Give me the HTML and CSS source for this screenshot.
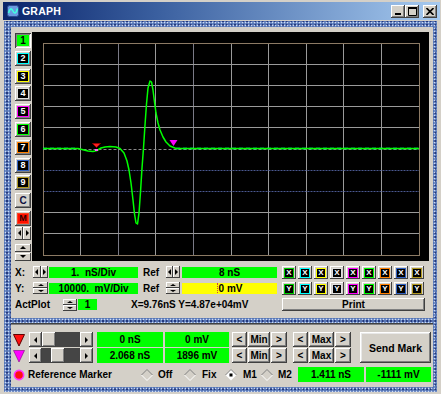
FILE: index.html
```html
<!DOCTYPE html>
<html>
<head>
<meta charset="utf-8">
<title>GRAPH</title>
<link rel="stylesheet" href="styles.css">
</head>
<body>
<div class="win">
  <div class="titlebar">
    <svg class="appicon" width="12" height="12" viewBox="0 0 12 12">
      <rect x="0.5" y="0.5" width="11" height="11" rx="2" fill="#6a9ae0" stroke="#2a4a90"/>
      <path d="M1.5 8 Q3.5 1 6 6 T10.5 3.5" fill="none" stroke="#40ffe0" stroke-width="1.6"/>
    </svg>
    <span class="title">GRAPH</span>
    <div class="tbtns">
      <div class="tbtn"><svg width="8" height="8" viewBox="0 0 8 8"><rect x="1" y="6" width="6" height="2" fill="#000"/></svg></div>
      <div class="tbtn"><svg width="9" height="9" viewBox="0 0 9 9"><path d="M0.5 0.5h8v8h-8z" fill="none" stroke="#000"/><rect x="0" y="0" width="9" height="2" fill="#000"/></svg></div>
      <div class="tbtn close"><svg width="8" height="7" viewBox="0 0 8 7"><path d="M0.5 0L7.5 7M7.5 0L0.5 7" stroke="#000" stroke-width="1.6"/></svg></div>
    </div>
  </div>

  <div class="frame">
    <div class="panel p1">
      <div class="top">
        <div class="chcol">
          <div class="ch on"><span>1</span></div>
          <div class="ch k2"><span>2</span></div>
          <div class="ch k3"><span>3</span></div>
          <div class="ch k4"><span>4</span></div>
          <div class="ch k5"><span>5</span></div>
          <div class="ch k6"><span>6</span></div>
          <div class="ch k7"><span>7</span></div>
          <div class="ch k8"><span>8</span></div>
          <div class="ch k9"><span>9</span></div>
          <div class="ch cc"><span>C</span></div>
          <div class="ch cm"><span>M</span></div>
          <div class="lr"><div class="half"><i class="tl"></i></div><div class="half"><i class="tr"></i></div></div>
          <div class="ud"><div class="half"><i class="tu"></i></div><div class="half"><i class="td"></i></div></div>
        </div>
        <div class="scope">
          <svg width="397" height="229" viewBox="32 32 397 229">
            <g class="grid" stroke="#9a9a9a" stroke-width="1" fill="none">
              <path d="M80.5 43.5V255.5M155.5 43.5V255.5M231.5 43.5V255.5M268.5 43.5V255.5M306.5 43.5V255.5M343.5 43.5V255.5M381.5 43.5V255.5"/>
              <path d="M118.5 43.5V255.5M193.5 43.5V255.5" stroke="#7a7a86"/>
              <path d="M43.5 64.5H419.5M43.5 85.5H419.5M43.5 106.5H419.5M43.5 127.5H419.5M43.5 212.5H419.5M43.5 233.5H419.5"/>
              <path d="M43.5 170.5H419.5M43.5 191.5H419.5" stroke="#4a5890" stroke-dasharray="2 1"/>
              <path d="M43.5 149.5H419.5" stroke="#8a8a8a" stroke-dasharray="3 2"/>
              <rect x="43.5" y="43.5" width="376" height="212" stroke="#8c7a64"/>
            </g>
            <path d="M43 148.5H78M176 148.5H419" stroke="#20e0e0" stroke-width="1.5" stroke-dasharray="4 3" fill="none"/>
            <polyline fill="none" stroke="#00ff00" stroke-width="1.5" stroke-linejoin="round"
              points="43,148.5 78,148.5 82,149.5 88,151 93,151.5 97,150.5 101,148 105,147 110,146.5 116,147 120,148.5 124,153 127,161 129,170 131,183 133,200 134.5,214 136,223 137.5,224 139,213 140.5,192 142,168 143.5,148 145,125 146.5,104 148,88 150,81 151.5,82 153,90 154.5,102 156,113 158,123 160,130 163,137 166,142 170,146 176,148.5 419,148.5"/>
            <polygon points="92.5,143.5 100.5,143.5 96.5,147.5" fill="#ff2020" stroke="#a00000" stroke-width="0.8"/>
            <rect x="95" y="149" width="3" height="2" fill="#ff60ff"/>
            <polygon points="169.5,140 177.5,140 173.5,146" fill="#ff00ff"/>
          </svg>
        </div>
      </div>

      <div class="row first">
        <span class="lbl w18">X:</span>
        <div class="spin w15"><div class="half"><i class="tl"></i></div><div class="half"><i class="tr"></i></div></div>
        <div class="lcd w89 gl1">1.  nS/Div</div>
        <span class="lbl reflbl">Ref</span>
        <div class="spin w14"><div class="half"><i class="tl"></i></div><div class="half"><i class="tr"></i></div></div>
        <div class="lcd w95 gl2">8 nS</div>
        <div class="togs">
          <div class="tg k1"><span>X</span></div>
          <div class="tg k2"><span>X</span></div>
          <div class="tg k3"><span>X</span></div>
          <div class="tg k4"><span>X</span></div>
          <div class="tg k5"><span>X</span></div>
          <div class="tg k6"><span>X</span></div>
          <div class="tg k7"><span>X</span></div>
          <div class="tg k8"><span>X</span></div>
          <div class="tg k9"><span>X</span></div>
        </div>
      </div>

      <div class="row">
        <span class="lbl w18">Y:</span>
        <div class="spin v w15"><div class="half"><i class="tu"></i></div><div class="half"><i class="td"></i></div></div>
        <div class="lcd w89 gl1">10000.  mV/Div</div>
        <span class="lbl reflbl">Ref</span>
        <div class="spin v w14"><div class="half"><i class="tu"></i></div><div class="half"><i class="td"></i></div></div>
        <div class="lcd w95 yel gl2"><i class="caret"></i>0 mV</div>
        <div class="togs">
          <div class="tg k1"><span>Y</span></div>
          <div class="tg k2"><span>Y</span></div>
          <div class="tg k3"><span>Y</span></div>
          <div class="tg k4"><span>Y</span></div>
          <div class="tg k5"><span>Y</span></div>
          <div class="tg k6"><span>Y</span></div>
          <div class="tg k7"><span>Y</span></div>
          <div class="tg k8"><span>Y</span></div>
          <div class="tg k9"><span>Y</span></div>
        </div>
      </div>

      <div class="row act">
        <span class="lbl w48">ActPlot</span>
        <div class="spin v w14"><div class="half"><i class="tu"></i></div><div class="half"><i class="td"></i></div></div>
        <div class="lcd w19 gl1">1</div>
        <span class="status">X=9.76nS Y=4.87e+04mV</span>
        <div class="btn print">Print</div>
      </div>
    </div>

    <div class="panel p2">
      <div class="p2top">
        <div class="mrows">
          <div class="mrow">
            <svg class="mk" width="12" height="14" viewBox="0 0 12 14"><polygon points="0.5,1.5 11.5,1.5 6,13" fill="#ff1010" stroke="#600000"/></svg>
            <div class="sb">
              <div class="btn sbb"><i class="tl"></i></div>
              <div class="track"><div class="thumb t1"></div></div>
              <div class="btn sbb"><i class="tr"></i></div>
            </div>
            <div class="lcd w66 g1">0 nS</div>
            <div class="lcd w64 g2">0 mV</div>
            <div class="btn sm lt">&lt;</div>
            <div class="btn sm mn">Min</div>
            <div class="btn sm gt">&gt;</div>
            <div class="btn sm lt l2">&lt;</div>
            <div class="btn sm mx">Max</div>
            <div class="btn sm gt">&gt;</div>
          </div>
          <div class="mrow">
            <svg class="mk" width="12" height="14" viewBox="0 0 12 14"><polygon points="0.5,1.5 11.5,1.5 6,13" fill="#ff00ff" stroke="#800080" stroke-width="0.6"/></svg>
            <div class="sb">
              <div class="btn sbb"><i class="tl"></i></div>
              <div class="track"><div class="thumb t2"></div></div>
              <div class="btn sbb"><i class="tr"></i></div>
            </div>
            <div class="lcd w66 g1">2.068 nS</div>
            <div class="lcd w64 g2">1896 mV</div>
            <div class="btn sm lt">&lt;</div>
            <div class="btn sm mn">Min</div>
            <div class="btn sm gt">&gt;</div>
            <div class="btn sm lt l2">&lt;</div>
            <div class="btn sm mx">Max</div>
            <div class="btn sm gt">&gt;</div>
          </div>
        </div>
        <div class="btn send">Send Mark</div>
      </div>
      <div class="mrow refrow">
        <svg class="mk" width="12" height="12" viewBox="0 0 12 12"><circle cx="6" cy="6" r="4.6" fill="#ff1010" stroke="#ff30ff" stroke-width="1.6"/></svg>
        <span class="rtext">Reference Marker</span>
        <svg class="dia" width="12" height="12" viewBox="0 0 12 12"><path d="M0.5 6L6 0.5L11.5 6" fill="none" stroke="#808080"/><path d="M0.5 6L6 11.5L11.5 6" fill="none" stroke="#ffffff"/></svg>
        <span class="opt o-off">Off</span>
        <svg class="dia" width="12" height="12" viewBox="0 0 12 12"><path d="M0.5 6L6 0.5L11.5 6" fill="none" stroke="#808080"/><path d="M0.5 6L6 11.5L11.5 6" fill="none" stroke="#ffffff"/></svg>
        <span class="opt o-fix">Fix</span>
        <svg class="dia" width="12" height="12" viewBox="0 0 12 12"><path d="M6 0.5L11.5 6L6 11.5L0.5 6Z" fill="#ffffff"/><path d="M0.5 6L6 0.5L11.5 6" fill="none" stroke="#808080"/><rect x="4.5" y="4.5" width="3" height="3" fill="#000"/></svg>
        <span class="opt o-m1">M1</span>
        <svg class="dia" width="12" height="12" viewBox="0 0 12 12"><path d="M0.5 6L6 0.5L11.5 6" fill="none" stroke="#808080"/><path d="M0.5 6L6 11.5L11.5 6" fill="none" stroke="#ffffff"/></svg>
        <span class="opt o-m2">M2</span>
        <div class="lcd w66 g3">1.411 nS</div>
        <div class="lcd w65 g4">-1111 mV</div>
      </div>
    </div>
  </div>
</div>
</body>
</html>
```
FILE: styles.css
```css
* { box-sizing: border-box; }
html, body { margin: 0; padding: 0; }
body {
  width: 441px; height: 394px; overflow: hidden;
  background: #d4d0c8;
  font-family: "Liberation Sans", Arial, sans-serif;
  font-size: 10px; font-weight: bold; color: #000;
}
.win { width: 441px; height: 394px; background: #d4d0c8; padding-top: 2px; }

/* title bar */
.titlebar {
  margin-left: 3px; width: 437px; height: 18px;
  background: linear-gradient(to right, #0a246a 0%, #3a5f9f 35%, #a6caf0 100%);
  display: flex; align-items: center; padding-left: 4px;
}
.appicon { margin-right: 3px; flex: none; }
.title { color: #fff; font-size: 10.5px; letter-spacing: 0.2px; }
.tbtns { margin-left: auto; display: flex; margin-right: 3px; }
.tbtn {
  width: 14px; height: 13px; background: #d4d0c8;
  display: flex; align-items: center; justify-content: center;
  box-shadow: inset -1px -1px #404040, inset 1px 1px #ffffff, inset -2px -2px #808080;
}
.tbtn.close { margin-left: 4px; }

/* textured blue frame */
.frame {
  margin: 1px 4px 0 4px; width: 433px; height: 371px;
  padding: 6px 4px 5px 7px;
  background-color: #5676b6;
  background-image:
    radial-gradient(circle, rgba(220,232,255,0.9) 0.7px, transparent 1.1px),
    radial-gradient(circle, rgba(20,40,110,0.8) 0.7px, transparent 1.1px);
  background-size: 3px 3px, 4px 4px;
  background-position: 0 0, 1px 2px;
  display: flex; flex-direction: column; gap: 5px;
}
.panel { background: #d4d0c8; }
.p1 { height: 291px; padding: 5px 4px 0 4px; }
.p2 {
  height: 64px; padding: 9px 2px 0 2px;
  box-shadow: inset 0 1px #404040, inset 0 2px #808080;
}

/* top area */
.top { display: flex; gap: 1px; height: 229px; }
.chcol { width: 16px; display: flex; flex-direction: column; padding-top: 1px; }
.ch {
  width: 16px; height: 15px; margin-bottom: 2.8px; padding: 2px;
  background: #d4d0c8;
  box-shadow: inset -1px -1px #404040, inset 1px 1px #ffffff, inset -2px -2px #808080;
  display: flex;
}
.ch span {
  flex: 1; background: #000; color: #fff;
  border: 1px solid var(--c, #fff);
  font-size: 9px; line-height: 9px; text-align: center; font-weight: bold;
}
.ch.on { box-shadow: inset 1px 1px #404040, inset -1px -1px #ffffff, inset 2px 2px #808080; }
.ch.on span { background: #00ff00; color: #000; border: none; line-height: 11px; font-size: 10px; }
.ch.cc span { background: #d4d0c8; color: #101040; border: none; line-height: 11px; font-size: 10px; }
.ch.cm span { background: #ff1000; color: #300000; border: 1px solid #ff4020; }
.ch.cm { margin-bottom: 1px; }

.k1 { --c: #00d000; } .k2 { --c: #00ffff; } .k3 { --c: #ffff00; }
.k4 { --c: #e0e0e0; } .k5 { --c: #ff00ff; } .k6 { --c: #00ff00; }
.k7 { --c: #ff8000; } .k8 { --c: #3060c0; } .k9 { --c: #b09820; }

.lr { display: flex; height: 13px; width: 16px; }
.ud { display: flex; flex-direction: column; height: 18px; width: 16px; margin-top: 4px; gap: 1px; }
.half {
  flex: 1; background: #d4d0c8;
  box-shadow: inset -1px -1px #404040, inset 1px 1px #ffffff;
  display: flex; align-items: center; justify-content: center;
}
.tl, .tr, .tu, .td { display: block; width: 0; height: 0; border-style: solid; }
.tl { border-width: 3px 3px 3px 0; border-color: transparent #000 transparent transparent; }
.tr { border-width: 3px 0 3px 3px; border-color: transparent transparent transparent #000; }
.tu { border-width: 0 3px 3px 3px; border-color: transparent transparent #000 transparent; }
.td { border-width: 3px 3px 0 3px; border-color: #000 transparent transparent transparent; }

.scope { width: 397px; height: 229px; background: #000; }
.scope svg { display: block; }

/* rows */
.row { display: flex; align-items: center; height: 12px; margin-top: 4px; }
.row.first { margin-top: 5px; }
.row.act { height: 13px; }
.lbl { flex: none; }
.w18 { width: 18px; }
.w48 { width: 48px; }
.reflbl { width: 28px; padding-left: 5px; }
.spin { display: flex; height: 12px; flex: none; }
.spin.v { flex-direction: column; }
.spin .half { box-shadow: inset -1px -1px #404040, inset 1px 1px #ffffff; }
.spin.v .tu, .spin.v .td { border-width: 2px 3px; }
.spin.v .tu { border-top-width: 0; }
.spin.v .td { border-bottom-width: 0; }
.w15 { width: 15px; } .w14 { width: 14px; }

.lcd {
  flex: none; background: #00ff00; color: #000; height: 11px;
  line-height: 11px; text-align: center; white-space: pre; font-size: 10px;
}
.lcd.yel { background: #ffff00; display: flex; justify-content: center; align-items: center; }
.caret { display: block; width: 0; height: 10px; border-left: 1px dotted #d04040; margin-right: 1px; }
.gl1 { margin-left: 1px; }
.gl2 { margin-left: 2px; }
.w89 { width: 89px; } .w95 { width: 95px; } .w19 { width: 19px; }
.w66 { width: 66px; } .w64 { width: 64px; } .w65 { width: 65px; }

.togs { display: flex; gap: 2px; margin-left: 5px; }
.tg {
  width: 14px; height: 13px; padding: 2px 2px 1px 2px; display: flex;
  background: #d4d0c8;
  box-shadow: inset -1px -1px #404040, inset 1px 1px #ffffff;
}
.tg span {
  flex: 1; background: #000; color: #fff; border: 1px solid var(--c);
  font-size: 8px; line-height: 8px; text-align: center; font-weight: bold;
}

.status { width: 151px; margin-left: 34px; white-space: nowrap; font-size: 10px; }
.btn {
  background: #d4d0c8;
  box-shadow: inset -1px -1px #404040, inset 1px 1px #ffffff, inset -2px -2px #808080;
  display: flex; align-items: center; justify-content: center; flex: none;
}
.print { width: 143px; height: 13px; }

/* panel 2 */
.p2top { display: flex; height: 31px; }
.mrows { display: flex; flex-direction: column; gap: 1px; }
.mrow { display: flex; align-items: center; height: 15px; }
.mk { flex: none; }
.sb { display: flex; width: 64px; height: 15px; margin-left: 4px; flex: none; }
.sbb { width: 13px; height: 15px; }
.track { flex: 1; background: #454545; display: flex; }
.thumb {
  width: 14px; height: 15px; background: #d4d0c8;
  box-shadow: inset -1px -1px #404040, inset 1px 1px #ffffff, inset -2px -2px #808080;
}
.thumb.t2 { margin-left: 9px; }
.g1 { margin-left: 4px; height: 15px; line-height: 15px; }
.g2 { margin-left: 2px; height: 15px; line-height: 15px; }
.sm { height: 15px; margin-left: 1px; }
.lt { width: 15px; margin-left: 3px; }
.lt.l2 { margin-left: 6px; }
.mn { width: 22px; }
.gt { width: 16px; }
.mx { width: 25px; }
.send { width: 71px; height: 31px; margin-left: 9px; font-size: 10.5px;
  box-shadow: inset -1px -1px #404040, inset 1px 1px #ffffff, inset -2px -2px #808080, inset 2px 2px #e8e8e8; }

.refrow { margin-top: 4px; }
.rtext { width: 113px; margin-left: 3px; white-space: nowrap; flex: none; }
.dia { flex: none; }
.opt { white-space: nowrap; flex: none; }
.o-off { width: 26px; margin-left: 5px; }
.o-fix { width: 23px; margin-left: 6px; }
.o-m1 { width: 18px; margin-left: 6px; }
.o-m2 { width: 20px; margin-left: 5px; }
.g3 { height: 15px; line-height: 15px; }
.g4 { height: 15px; line-height: 15px; margin-left: 2px; }
```
